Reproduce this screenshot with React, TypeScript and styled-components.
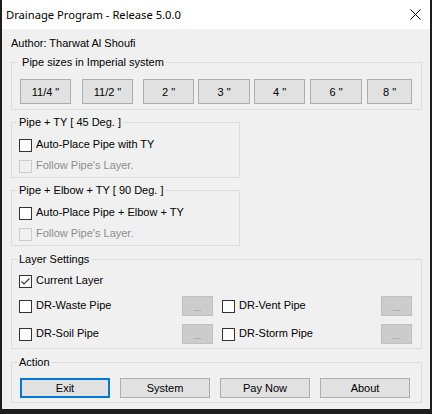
import React from "react";
import styled, { createGlobalStyle } from "styled-components";

const Global = createGlobalStyle`
  html, body { margin: 0; padding: 0; background: #f0f0f0; }
  * { box-sizing: border-box; }
`;

const Window = styled.div`
  width: 432px;
  height: 414px;
  display: flex;
  flex-direction: column;
  border-left: 2px solid #1e1e1e;
  border-right: 2px solid #1e1e1e;
  border-bottom: 5px solid #1e1e1e;
  background: #f0f0f0;
  font-family: "Liberation Sans", Arial, sans-serif;
  font-size: 11px;
  color: #000;
`;

const TitleBar = styled.div`
  height: 29px;
  flex: none;
  background: #ffffff;
  display: flex;
  align-items: center;
  justify-content: space-between;
  padding: 0 9px 0 4px;
`;

const Title = styled.span`
  font-family: "Noto Sans", "Open Sans", sans-serif;
  font-size: 11.2px;
  color: #000;
  line-height: 16px;
`;

const CloseIcon = () => (
  <svg width="11" height="11" viewBox="0 0 11 11">
    <path d="M0.5 0.5 L10.5 10.5 M10.5 0.5 L0.5 10.5" stroke="#000" strokeWidth="1" fill="none" />
  </svg>
);

const Content = styled.div`
  flex: 1;
  display: flex;
  flex-direction: column;
  padding: 8px 0 0 9px;
`;

const Author = styled.div`
  line-height: 13px;
  height: 13px;
`;

const Group = styled.fieldset<{ $w: number; $mt: number; $pt: number; $pb: number }>`
  width: ${(p) => p.$w}px;
  margin: ${(p) => p.$mt}px 0 0 0;
  padding: ${(p) => p.$pt}px 0 ${(p) => p.$pb}px 0;
  border: 1px solid #dcdcdc;
  min-width: 0;
`;

const Legend = styled.legend`
  margin-left: 5px;
  padding: 0 2px;
  line-height: 13px;
  height: 13px;
  font-size: 11px;
  white-space: pre;
`;

const GroupBody = styled.div<{ $pl: number }>`
  padding-left: ${(p) => p.$pl}px;
`;

const SizeRow = styled.div`
  display: flex;
  align-items: center;
`;

const SizeButton = styled.button<{ $w: number; $ml: number }>`
  width: ${(p) => p.$w}px;
  margin-left: ${(p) => p.$ml}px;
  height: 25px;
  padding: 0;
  background: #e1e1e1;
  border: 1px solid #adadad;
  font-family: "Liberation Sans", Arial, sans-serif;
  font-size: 11px;
  color: #000;
  white-space: pre;
`;

const CheckList = styled.div`
  display: flex;
  flex-direction: column;
  gap: 8px;
`;

const CheckRow = styled.label<{ $disabled?: boolean }>`
  display: flex;
  align-items: center;
  gap: 4px;
  height: 13px;
  line-height: 13px;
  color: ${(p) => (p.$disabled ? "#8d8d8d" : "#000")};
`;

const Box = styled.span<{ $disabled?: boolean }>`
  width: 13px;
  height: 13px;
  flex: none;
  border: 1px solid ${(p) => (p.$disabled ? "#cccccc" : "#333333")};
  background: ${(p) => (p.$disabled ? "#f0f0f0" : "#ffffff")};
  display: flex;
  align-items: center;
  justify-content: center;
`;

const CheckLabel = styled.span`
  position: relative;
  top: -1px;
`;

const Check = ({ label, disabled, checked }: { label: string; disabled?: boolean; checked?: boolean }) => (
  <CheckRow $disabled={disabled}>
    <Box $disabled={disabled}>
      {checked && (
        <svg width="11" height="11" viewBox="0 0 11 11">
          <path d="M1.5 5.5 L4 8 L9.5 2.5" stroke="#333" strokeWidth="1.1" fill="none" />
        </svg>
      )}
    </Box>
    <CheckLabel>{label}</CheckLabel>
  </CheckRow>
);

const LayerGrid = styled.div`
  display: grid;
  grid-template-columns: 194px 190px;
  column-gap: 9px;
  row-gap: 8px;
`;

const LayerCell = styled.div`
  display: flex;
  align-items: center;
  justify-content: space-between;
  height: 20px;
`;

const FullRow = styled.div`
  grid-column: 1 / -1;
`;

const DotsButton = styled.button`
  width: 31px;
  height: 20px;
  padding: 0 0 2px 0;
  background: #cccccc;
  border: 1px solid #bfbfbf;
  color: #838383;
  font-family: "Liberation Sans", Arial, sans-serif;
  font-size: 9px;
  display: flex;
  align-items: flex-end;
  justify-content: center;
`;

const ActionRow = styled.div`
  display: flex;
  gap: 10px;
`;

const ActionButton = styled.button<{ $focused?: boolean }>`
  width: 90px;
  height: 20px;
  padding: 0;
  background: #e1e1e1;
  border: ${(p) => (p.$focused ? "2px solid #0078d7" : "1px solid #adadad")};
  font-family: "Liberation Sans", Arial, sans-serif;
  font-size: 11px;
  color: #000;
`;

const sizes = [
  { t: "11/4 \"", w: 51, ml: 0 },
  { t: "11/2 \"", w: 51, ml: 11 },
  { t: "2 \"", w: 51, ml: 10 },
  { t: "3 \"", w: 52, ml: 4 },
  { t: "4 \"", w: 51, ml: 4 },
  { t: "6 \"", w: 52, ml: 5 },
  { t: "8 \"", w: 45, ml: 5 },
];

export default function App() {
  return (
    <>
      <Global />
      <Window>
        <TitleBar>
          <Title>Drainage Program - Release 5.0.0</Title>
          <CloseIcon />
        </TitleBar>
        <Content>
          <Author>Author: Tharwat Al Shoufi</Author>
          <Group $w={411} $mt={6} $pt={10} $pb={5}>
            <Legend> Pipe sizes in Imperial system</Legend>
            <GroupBody $pl={8}>
              <SizeRow>
                {sizes.map((s) => (
                  <SizeButton key={s.t} $w={s.w} $ml={s.ml}>
                    {s.t}
                  </SizeButton>
                ))}
              </SizeRow>
            </GroupBody>
          </Group>
          <Group $w={229} $mt={6} $pt={10} $pb={4}>
            <Legend>Pipe + TY [ 45 Deg. ]</Legend>
            <GroupBody $pl={7}>
              <CheckList>
                <Check label="Auto-Place Pipe with TY" />
                <Check label="Follow Pipe's Layer." disabled />
              </CheckList>
            </GroupBody>
          </Group>
          <Group $w={229} $mt={6} $pt={10} $pb={4}>
            <Legend>Pipe + Elbow + TY [ 90 Deg. ]</Legend>
            <GroupBody $pl={7}>
              <CheckList>
                <Check label="Auto-Place Pipe + Elbow + TY" />
                <Check label="Follow Pipe's Layer." disabled />
              </CheckList>
            </GroupBody>
          </Group>
          <Group $w={411} $mt={7} $pt={9} $pb={4}>
            <Legend>Layer Settings</Legend>
            <GroupBody $pl={7}>
              <LayerGrid>
                <FullRow>
                  <Check label="Current Layer" checked />
                </FullRow>
                <LayerCell>
                  <Check label="DR-Waste Pipe" />
                  <DotsButton>...</DotsButton>
                </LayerCell>
                <LayerCell>
                  <Check label="DR-Vent Pipe" />
                  <DotsButton>...</DotsButton>
                </LayerCell>
                <LayerCell>
                  <Check label="DR-Soil Pipe" />
                  <DotsButton>...</DotsButton>
                </LayerCell>
                <LayerCell>
                  <Check label="DR-Storm Pipe" />
                  <DotsButton>...</DotsButton>
                </LayerCell>
              </LayerGrid>
            </GroupBody>
          </Group>
          <Group $w={411} $mt={7} $pt={9} $pb={4}>
            <Legend>Action</Legend>
            <GroupBody $pl={8}>
              <ActionRow>
                <ActionButton $focused>Exit</ActionButton>
                <ActionButton>System</ActionButton>
                <ActionButton>Pay Now</ActionButton>
                <ActionButton>About</ActionButton>
              </ActionRow>
            </GroupBody>
          </Group>
        </Content>
      </Window>
    </>
  );
}
